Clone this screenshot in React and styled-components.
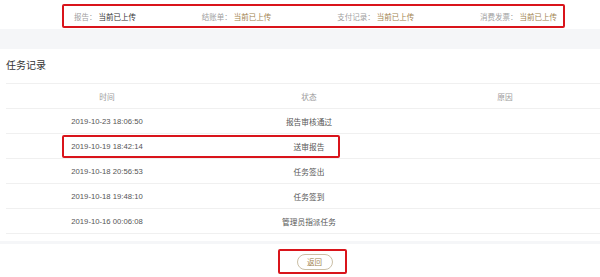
import React from 'react'
import styled, { createGlobalStyle } from 'styled-components'

const GlobalStyle = createGlobalStyle`
body {
margin:0;
background:#fff;
overflow:hidden;
font-family:"Liberation Sans", "Noto Sans CJK SC", sans-serif;
}
`

const Page = styled.div`
width:600px;
height:277px;
overflow:hidden;
display:flex;
flex-direction:column;
`

const TopArea = styled.div`
height:29px;
padding-top:4px;
box-sizing:border-box;
`

const UploadBar = styled.div`
margin-left:62px;
width:503px;
height:24px;
box-sizing:border-box;
border:2px solid #d9141b;
border-radius:2px;
display:flex;
align-items:center;
justify-content:space-between;
padding:0 6px 0 10px;
font-size:7.5px;
`

const UploadItem = styled.div`
display:flex;
align-items:center;
`

const Label = styled.span`
color:#a0a0a0;
margin-right:2px;
`

const Value = styled.span`
color:${props => props.dark ? '#333' : '#a2844f'};
`

const Band = styled.div`
height:${props => props.h}px;
background:#f5f6f8;
`

const Spacer = styled.div`
height:${props => props.h}px;
`

const Section = styled.div`
padding:0 0 0 6px;
`

const Title = styled.h2`
margin:0;
height:34px;
line-height:34px;
font-size:10px;
font-weight:normal;
color:#333;
`

const Table = styled.div`
border-top:1px solid #f0f0f0;
`

const Row = styled.div`
position:relative;
display:grid;
grid-template-columns:202px 202px 1fr;
height:25px;
align-items:center;
border-bottom:1px solid #f0f0f0;
box-sizing:border-box;
font-size:7.7px;
color:${props => props.head ? '#9a9a9a' : '#555'};
`

const Cell = styled.div`
text-align:center;
`

const Highlight = styled.div`
position:absolute;
left:56px;
top:1px;
width:278px;
height:23px;
box-sizing:border-box;
border:2px solid #d9141b;
border-radius:2px;
`

const ButtonRow = styled.div`
display:flex;
padding:5px 0 0 278px;
`

const ButtonFrame = styled.div`
width:69px;
height:25px;
box-sizing:border-box;
border:2px solid #d9141b;
border-radius:2px;
display:flex;
align-items:center;
justify-content:center;
padding-left:4px;
`

const BackButton = styled.button`
width:36px;
height:16px;
padding:0;
border:1px solid #cbbfa6;
border-radius:8px;
background:#fff;
color:#a2844f;
font-family:inherit;
font-size:7.5px;
cursor:pointer;
`

const uploads = [
    { label: '报告：', value: '当前已上传', dark: true },
    { label: '结账单：', value: '当前已上传' },
    { label: '支付记录：', value: '当前已上传' },
    { label: '消费发票：', value: '当前已上传' },
]

const records = [
    { time: '2019-10-23 18:06:50', status: '报告审核通过', reason: '' },
    { time: '2019-10-19 18:42:14', status: '送审报告', reason: '', marked: true },
    { time: '2019-10-18 20:56:53', status: '任务签出', reason: '' },
    { time: '2019-10-18 19:48:10', status: '任务签到', reason: '' },
    { time: '2019-10-16 00:06:08', status: '管理员指派任务', reason: '' },
]

function App() {
    return (
        <Page>
            <GlobalStyle />
            <TopArea>
                <UploadBar>
                    {uploads.map(item => (
                        <UploadItem key={item.label}>
                            <Label>{item.label}</Label>
                            <Value dark={item.dark}>{item.value}</Value>
                        </UploadItem>
                    ))}
                </UploadBar>
            </TopArea>
            <Band h={20} />
            <Section>
                <Title>任务记录</Title>
                <Table>
                    <Row head>
                        <Cell>时间</Cell>
                        <Cell>状态</Cell>
                        <Cell>原因</Cell>
                    </Row>
                    {records.map(record => (
                        <Row key={record.time}>
                            <Cell>{record.time}</Cell>
                            <Cell>{record.status}</Cell>
                            <Cell>{record.reason}</Cell>
                            {record.marked && <Highlight />}
                        </Row>
                    ))}
                </Table>
            </Section>
            <Spacer h={7} />
            <Band h={3} />
            <ButtonRow>
                <ButtonFrame>
                    <BackButton>返回</BackButton>
                </ButtonFrame>
            </ButtonRow>
        </Page>
    )
}

export default App
